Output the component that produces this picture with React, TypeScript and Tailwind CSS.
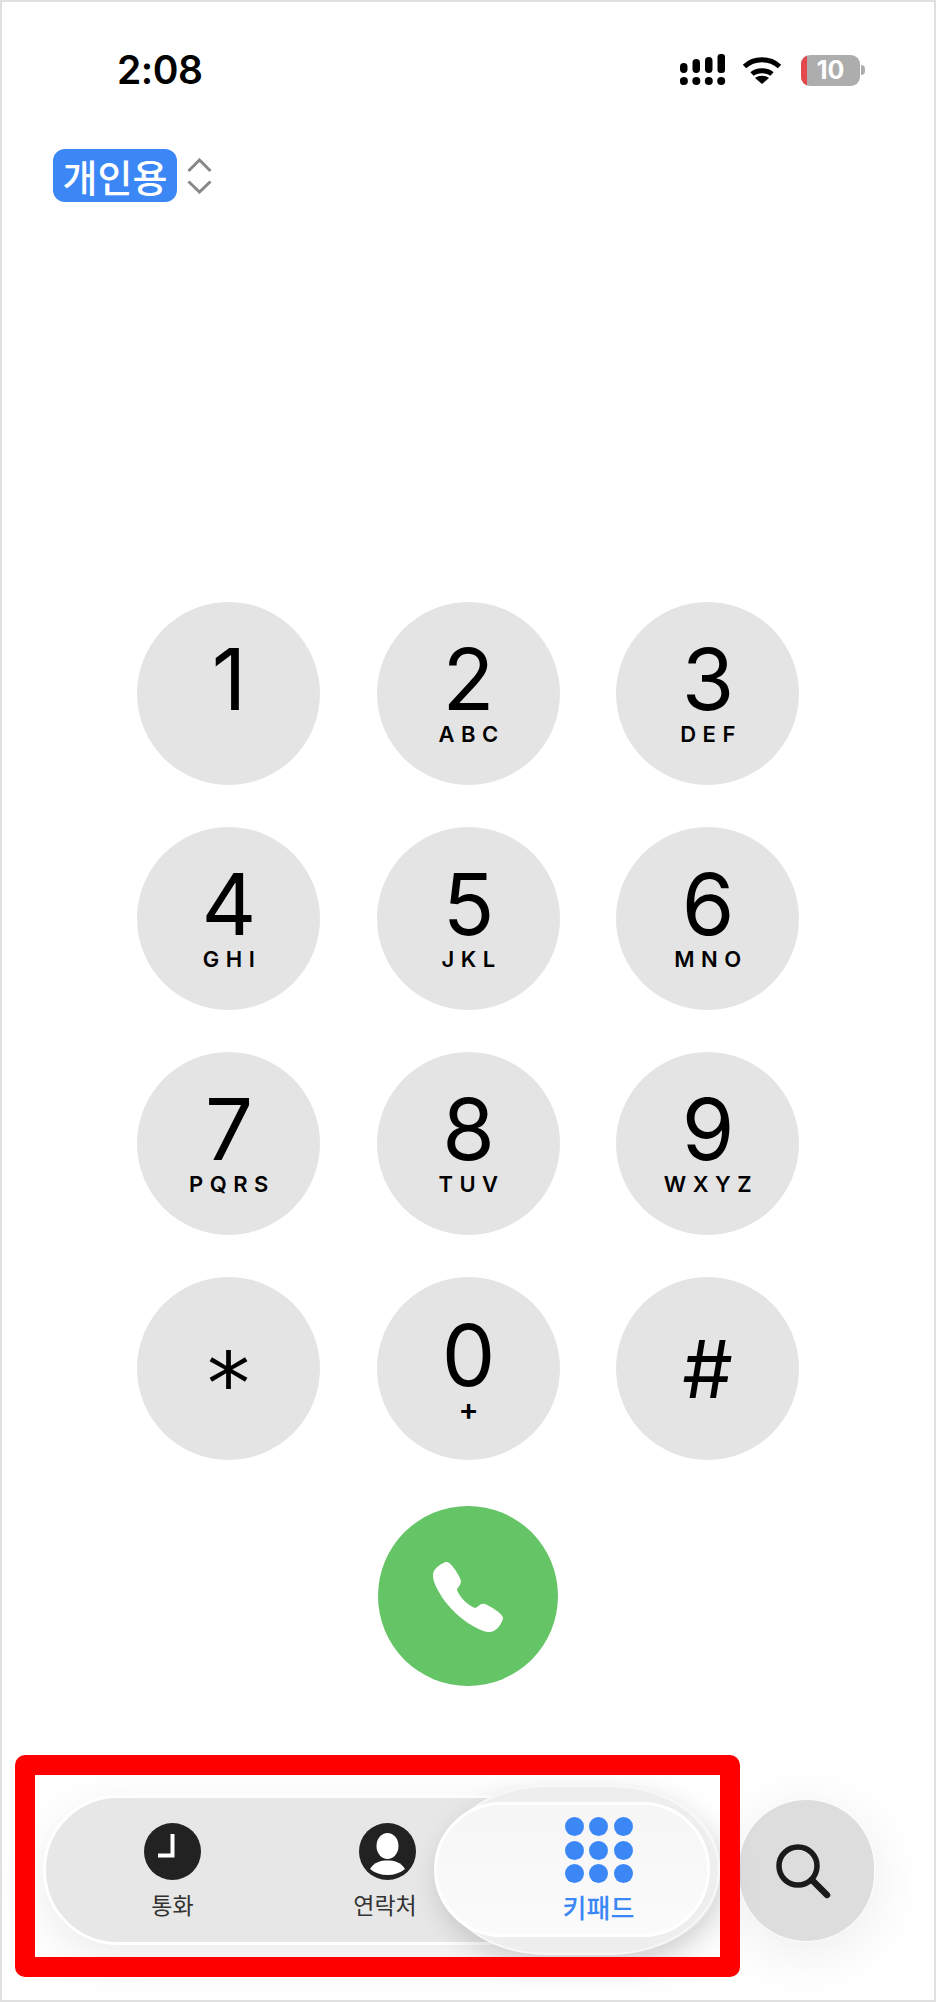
import { IoCall } from "react-icons/io5";

const keys = [
  { digit: "1", sub: "" },
  { digit: "2", sub: "ABC" },
  { digit: "3", sub: "DEF" },
  { digit: "4", sub: "GHI" },
  { digit: "5", sub: "JKL" },
  { digit: "6", sub: "MNO" },
  { digit: "7", sub: "PQRS" },
  { digit: "8", sub: "TUV" },
  { digit: "9", sub: "WXYZ" },
];

const korean = "font-['Noto_Sans_CJK_KR','Noto_Sans',sans-serif]";

function SignalIcon() {
  return (
    <svg width="46" height="32" viewBox="0 0 46 32" fill="black">
      <rect x="0" y="9" width="7.5" height="10" rx="3.7" />
      <rect x="12.5" y="5" width="7.5" height="14" rx="3.7" />
      <rect x="25" y="3" width="7.5" height="16" rx="3.7" />
      <rect x="37.5" y="0" width="7.5" height="19" rx="3" />
      <circle cx="3.9" cy="27" r="4" />
      <circle cx="16.3" cy="27" r="4" />
      <circle cx="28.8" cy="27" r="4" />
      <circle cx="41.2" cy="27" r="4" />
    </svg>
  );
}

function WifiIcon() {
  return (
    <svg width="40" height="30" viewBox="0 0 40 30" fill="none" stroke="black">
      <path d="M2.5 11.5C12 2.5 28 2.5 37.5 11.5" strokeWidth="5" />
      <path d="M10 19C15 14.5 25 14.5 30 19" strokeWidth="5" />
      <path d="M20 29L13 23C17 20 23 20 27 23Z" fill="black" stroke="none" />
    </svg>
  );
}

function Key({ digit, sub }: { digit: string; sub: string }) {
  return (
    <div className="flex h-[183px] w-[183px] flex-col items-center rounded-full bg-[#e4e4e4] pt-[47px] pl-[1px] text-black">
      <span className="h-[62px] font-['Inter',sans-serif] text-[85px] leading-[62px] font-normal">{digit}</span>
      {sub && (
        <span className="mt-[15px] pl-[6px] font-['Inter',sans-serif] text-[22px] leading-[17px] font-semibold tracking-[6.5px]">
          {sub}
        </span>
      )}
    </div>
  );
}

export default function App() {
  return (
    <div className="relative h-[2002px] w-[936px] overflow-hidden bg-white pt-[50px] shadow-[inset_0_0_0_2px_#e0e0e0]">
      <div className="flex h-[40px] items-center justify-between pr-[71px] pl-[117px]">
        <span className="font-['Inter',sans-serif] text-[39px] leading-[40px] font-semibold tracking-[-0.5px] text-black">2:08</span>
        <div className="flex items-center">
          <SignalIcon />
          <div className="mr-[19px] ml-[16px]">
            <WifiIcon />
          </div>
          <div className="relative flex h-[31px] w-[59px] items-center justify-center overflow-hidden rounded-[9px] bg-[#adadad]">
            <span className="absolute top-0 bottom-0 left-0 w-[6px] bg-[#e5484a]" />
            <span className="font-['Inter',sans-serif] text-[25px] leading-none font-bold text-white">10</span>
          </div>
          <span className="ml-[1px] h-[10px] w-[4px] rounded-r-full bg-[#adadad]" />
        </div>
      </div>

      <div className="mt-[59px] ml-[53px] flex items-center gap-[10px]">
        <span className={`${korean} flex h-[53px] w-[124px] items-center justify-center rounded-[12px] bg-[#3b87f5] text-[38px] leading-none font-medium text-white`}>
          개인용
        </span>
        <svg width="25" height="36" viewBox="0 0 25 36" fill="none" stroke="#888888" strokeWidth="3">
          <path d="M1.5 13L12.5 2L23.5 13" />
          <path d="M1.5 23.5L12.5 34L23.5 23.5" />
        </svg>
      </div>

      <div className="mx-auto mt-[400px] grid w-fit grid-cols-[183px_183px_183px] gap-x-[56.5px] gap-y-[42px]">
        {keys.map((key) => (
          <Key key={key.digit} digit={key.digit} sub={key.sub} />
        ))}
        <div className="flex h-[183px] w-[183px] items-center justify-center rounded-full bg-[#e4e4e4] pt-[30px]">
          <span className="font-['DejaVu_Sans',sans-serif] text-[86px] leading-none text-black">*</span>
        </div>
        <div className="flex h-[183px] w-[183px] flex-col items-center rounded-full bg-[#e4e4e4] pt-[48px] pl-[1px] text-black">
          <span className="h-[62px] font-['Inter',sans-serif] text-[85px] leading-[62px] font-normal">0</span>
          <span className="mt-[10px] font-['Inter',sans-serif] text-[30px] leading-[24px] font-semibold">+</span>
        </div>
        <div className="flex h-[183px] w-[183px] items-center justify-center rounded-full bg-[#e4e4e4]">
          <span className="font-['Inter',sans-serif] text-[80px] leading-none font-normal text-black">#</span>
        </div>
      </div>

      <div className="mx-auto mt-[46px] flex h-[180px] w-[180px] items-center justify-center rounded-full bg-[#65c466] pt-[2px] text-white">
        <IoCall size={80} />
      </div>

      <div className="mt-[109px] ml-[43px] flex items-center">
        <div className="relative flex h-[150px] w-[677px] items-center rounded-full border-[3px] border-white bg-[#e7e7e7] pl-[19px] shadow-[0_14px_50px_rgba(0,0,0,0.08)]">
          <span className="absolute top-[-13px] left-[391px] h-[170px] w-[283px] rounded-[110px/85px] border-2 border-[#f8f8f8] bg-[#eeeeee] shadow-[0_10px_26px_rgba(0,0,0,0.14)]" />
          <span className="absolute top-[4px] left-[388px] h-[135px] w-[276px] rounded-full border-[3px] border-white bg-linear-to-b from-[#f6f6f6] to-[#fbfbfb]" />

          <div className="relative flex w-[215px] flex-col items-center pt-[2px] text-[#333333]">
            <svg width="57" height="57" viewBox="0 0 57 57">
              <circle cx="28.5" cy="28.5" r="28.5" fill="#222222" />
              <path d="M28.5 11V32.5H14" fill="none" stroke="white" strokeWidth="4" />
            </svg>
            <span className={`${korean} mt-[9px] text-[23px] leading-[30px]`}>통화</span>
          </div>

          <div className="relative flex w-[215px] flex-col items-center pt-[2px] text-[#333333]">
            <svg width="57" height="57" viewBox="0 0 57 57">
              <circle cx="28.5" cy="28.5" r="28.5" fill="#222222" />
              <ellipse cx="28.5" cy="23" rx="11" ry="13" fill="white" />
              <path d="M11 46C15 39 22 37.5 28.5 37.5C35 37.5 42 39 46 46C41 50 35 52 28.5 52C22 52 16 50 11 46Z" fill="white" />
            </svg>
            <span className={`${korean} mt-[9px] mr-[5px] text-[23px] leading-[30px]`}>연락처</span>
          </div>

          <div className="relative flex w-[207px] flex-col items-center text-[#3b87f5]">
            <div className="grid grid-cols-[19px_19px_19px] gap-x-[5.5px] gap-y-[4.5px]">
              {[0, 1, 2, 3, 4, 5, 6, 7, 8].map((dot) => (
                <span key={dot} className="h-[19px] w-[19px] rounded-full bg-[#3b87f5]" />
              ))}
            </div>
            <span className={`${korean} mt-[8px] text-[26px] leading-[32px] font-medium`}>키패드</span>
          </div>
        </div>

        <div className="ml-[18px] flex h-[143px] w-[137px] items-center justify-center rounded-full border border-white bg-[#dddddd] pt-[5px] pr-[3px] shadow-[0_12px_60px_rgba(0,0,0,0.08)]">
          <svg width="64" height="64" viewBox="0 0 64 64" fill="none" stroke="#1a1a1a" strokeWidth="5.5" strokeLinecap="round">
            <circle cx="25" cy="25" r="19" />
            <path d="M39 39L54 54" strokeWidth="6.5" />
          </svg>
        </div>
      </div>

      <div className="absolute top-[1755px] left-[15px] h-[222px] w-[725px] rounded-[10px] border-[20px] border-[#ff0000]" />
    </div>
  );
}
